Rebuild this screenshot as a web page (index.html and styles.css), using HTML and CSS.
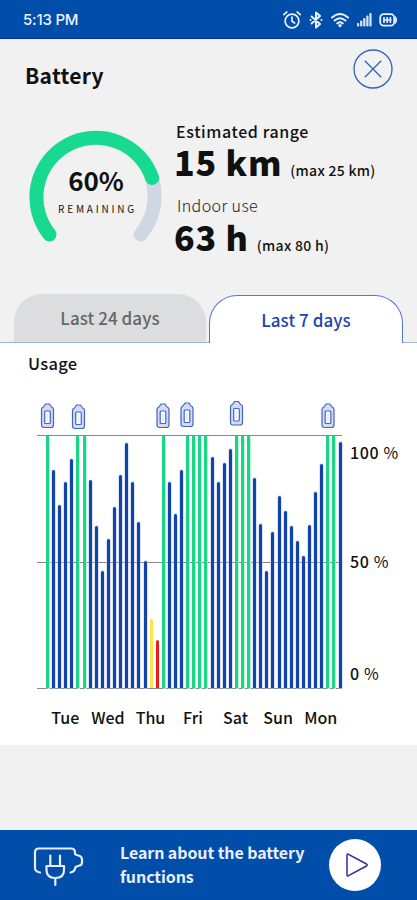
FILE: index.html
```html
<!DOCTYPE html>
<html lang="en">
<head>
  <meta charset="UTF-8">
  <meta name="viewport" content="width=device-width, initial-scale=1">
  <title>Battery</title>
  <link rel="stylesheet" href="styles.css">
</head>
<body>
  <div class="status-bar">
    <span class="time">5:13 PM</span>
    <div class="status-icons">
      <svg width="20" height="20" viewBox="0 0 20 20" fill="none" stroke="#e8efff" stroke-width="1.700" stroke-linecap="round">
        <circle cx="10" cy="11" r="6.900"/>
        <path d="M10 7v4.200l2.600 1.800M1.800 4.600l3-2.600M18.200 4.600l-3-2.600"/>
      </svg>
      <svg width="14" height="18" viewBox="0 0 14 18" fill="none" stroke="#e8efff" stroke-width="2" stroke-linejoin="round">
        <path d="M2 5l9 8-4 3.600V1.400L11 5l-9 8"/>
        <path d="M1.500 9h.1M12.400 9h.1" stroke-linecap="round"/>
      </svg>
      <svg width="20" height="16" viewBox="0 0 20 16" fill="none" stroke="#e8efff" stroke-width="2" stroke-linecap="round">
        <path d="M2 5.500Q10-1.500 18 5.500M4.600 8.600Q10 4 15.400 8.600M7.200 11.400Q10 9 12.800 11.400"/>
        <circle cx="10" cy="13.600" r=".7" fill="#e8efff"/>
      </svg>
      <svg width="15" height="15" viewBox="0 0 15 15" fill="#dbe5fa">
        <rect x="0" y="11" width="2.200" height="3.500" rx=".8"/>
        <rect x="3.100" y="8.500" width="2.200" height="6" rx=".8"/>
        <rect x="6.200" y="6" width="2.200" height="8.500" rx=".8"/>
        <rect x="9.300" y="3.500" width="2.200" height="11" rx=".8"/>
        <rect x="12.400" y="1" width="2.200" height="13.500" rx=".8"/>
      </svg>
      <svg width="19" height="14" viewBox="0 0 19 14" fill="none" stroke="#e8efff" stroke-width="1.800">
        <rect x="1.200" y="1.200" width="14" height="11.400" rx="3.500"/>
        <path d="M16.500 3.500q2.600 3.500 0 7z" fill="#e8efff" stroke-width=".8"/>
        <path d="M5 4v6M8.200 4v6M11.400 4v6M4 7h8.500" stroke-width="1.600"/>
      </svg>
    </div>
  </div>

  <header class="header">
    <h1>Battery</h1>
    <button class="close" aria-label="Close">
      <svg width="40" height="40" viewBox="0 0 40 40" fill="none" stroke="#2f62b8" stroke-width="1.300">
        <circle cx="20" cy="20" r="19"/>
        <path d="M11.800 11.800l16.400 16.400M28.200 11.800l-16.400 16.400"/>
      </svg>
    </button>
  </header>

  <section class="summary">
    <div class="gauge">
      <svg width="134" height="114" viewBox="0 0 134 114" fill="none" stroke-width="14" stroke-linecap="round">
        <path d="M123.700 49A59.500 59.500 0 0 1 112.700 105.500" stroke="#cfd8e2"/>
        <path d="M21.500 105.500A59.500 59.500 0 1 1 124.200 49" stroke="#17d990"/>
      </svg>
      <div class="gauge-text">
        <strong>60%</strong>
        <span>REMAINING</span>
      </div>
    </div>
    <div class="stats">
      <div class="stat range">
        <p class="stat-label">Estimated range</p>
        <p class="stat-value"><b>15 km</b><small>(max 25 km)</small></p>
      </div>
      <div class="stat indoor">
        <p class="stat-label">Indoor use</p>
        <p class="stat-value"><b>63 h</b><small>(max 80 h)</small></p>
      </div>
    </div>
  </section>

  <nav class="tabs">
    <a class="tab">Last 24 days</a>
    <a class="tab active">Last 7 days</a>
  </nav>

  <main class="panel">
    <h2>Usage</h2>
    <svg class="charges" width="305" height="30" viewBox="0 0 305 30">
      <defs>
        <g id="charge" fill="none" stroke-linejoin="round">
          <path d="M0 6.500q0-2 2-2.500l2-3h4l2 3q2 .5 2 2.500V22q0 2.500-2.500 2.500h-7Q0 24.500 0 22z" fill="#d3daf5" stroke="#3f66c0" stroke-width="1.200"/>
          <rect x="3.200" y="8" width="5.600" height="12.500" rx="1" fill="#fff" stroke="#3f66c0" stroke-width="1.200"/>
          <path d="M6 10.500v7.500" stroke="#e2e7f9" stroke-width="1.500"/>
        </g>
      </defs>
      <use href="#charge" x="4.500" y="3"/>
      <use href="#charge" x="35.500" y="4"/>
      <use href="#charge" x="120" y="3"/>
      <use href="#charge" x="144" y="2"/>
      <use href="#charge" x="193.500" y="0.500"/>
      <use href="#charge" x="285" y="3"/>
    </svg>
    <div class="chart">
      <div class="plot">
        <i class="bar full"></i>
        <i class="bar" style="height:218px"></i>
        <i class="bar" style="height:183px"></i>
        <i class="bar" style="height:206px"></i>
        <i class="bar" style="height:229px"></i>
        <i class="bar full"></i>
        <i class="bar full"></i>
        <i class="bar" style="height:208px"></i>
        <i class="bar" style="height:162px"></i>
        <i class="bar" style="height:117px"></i>
        <i class="bar" style="height:149px"></i>
        <i class="bar" style="height:181px"></i>
        <i class="bar" style="height:213px"></i>
        <i class="bar" style="height:245px"></i>
        <i class="bar" style="height:206px"></i>
        <i class="bar" style="height:166px"></i>
        <i class="bar" style="height:127px"></i>
        <i class="bar low" style="height:69px"></i>
        <i class="bar critical" style="height:48px"></i>
        <i class="bar full"></i>
        <i class="bar" style="height:206px"></i>
        <i class="bar" style="height:174px"></i>
        <i class="bar" style="height:218px"></i>
        <i class="bar full"></i>
        <i class="bar full"></i>
        <i class="bar full"></i>
        <i class="bar full"></i>
        <i class="bar" style="height:231px"></i>
        <i class="bar" style="height:206px"></i>
        <i class="bar" style="height:225px"></i>
        <i class="bar" style="height:239px"></i>
        <i class="bar full"></i>
        <i class="bar full"></i>
        <i class="bar full"></i>
        <i class="bar" style="height:210px"></i>
        <i class="bar" style="height:164px"></i>
        <i class="bar" style="height:117px"></i>
        <i class="bar" style="height:156px"></i>
        <i class="bar" style="height:192px"></i>
        <i class="bar" style="height:177px"></i>
        <i class="bar" style="height:162px"></i>
        <i class="bar" style="height:147px"></i>
        <i class="bar" style="height:132px"></i>
        <i class="bar" style="height:163px"></i>
        <i class="bar" style="height:196px"></i>
        <i class="bar" style="height:224px"></i>
        <i class="bar full"></i>
        <i class="bar full"></i>
        <i class="bar" style="height:246px"></i>
      </div>
      <div class="scale">
        <span>100 <em>%</em></span>
        <span>50 <em>%</em></span>
        <span>0 <em>%</em></span>
      </div>
    </div>
    <div class="days">
      <span>Tue</span>
      <span>Wed</span>
      <span>Thu</span>
      <span>Fri</span>
      <span>Sat</span>
      <span>Sun</span>
      <span>Mon</span>
    </div>
  </main>

  <footer class="learn">
    <svg class="plug" width="52" height="42" viewBox="0 0 52 42" fill="none" stroke="#e6edfc" stroke-width="2.200" stroke-linecap="round" stroke-linejoin="round">
      <path d="M7 26.500q-5-1-5-4.500V6.500q0-4 4-4h32q4 0 4 4v1.500q.5 1 3.500 1.500 3.500 1 3.500 4v3q0 3-4 3.500-3 .5-3 3-1 3-4.500 3.500"/>
      <path d="M17.300 9.500v10M27 9.500v10"/>
      <path d="M13.500 20h17.500v4q0 8-8.700 8t-8.800-8zM22.300 32v7"/>
    </svg>
    <p>Learn about the battery functions</p>
    <button class="play" aria-label="Play">
      <svg width="24" height="26" viewBox="0 0 24 26" fill="none" stroke="#2b2f96" stroke-width="1.500" stroke-linejoin="round">
        <path d="M2 3.200q0-1.600 1.500-.9l18 9.700q1.500 1 0 2l-18 9.700q-1.500.7-1.500-.9z"/>
      </svg>
    </button>
  </footer>
</body>
</html>
```

FILE: styles.css
```css
* {
  box-sizing: border-box;
}
body {
  display: flex;
  flex-direction: column;
  height: 900px;
  margin: 0;
  background-color: #f1f1f1;
  color: #111;
  font-family: "Noto Sans CJK SC", "Noto Sans", sans-serif;
}
h1, h2, p {
  margin: 0;
}
svg {
  display: block;
  flex: none;
}
button {
  padding: 0;
  border: none;
  background: none;
}

.status-bar {
  display: flex;
  justify-content: space-between;
  align-items: center;
  height: 39px;
  padding: 1px 19px 0 23px;
  background-color: #004eaa;
  border-bottom: 1px solid #00309a;
}
.time {
  color: #edf2ff;
  font: 500 15px Inter, sans-serif;
  letter-spacing: -0.2px;
}
.status-icons {
  display: flex;
  align-items: center;
  gap: 7px;
}

.header {
  display: flex;
  justify-content: space-between;
  height: 81px;
  padding: 10px 24px 0 25px;
}
h1 {
  margin-top: 11px;
  font-size: 21px;
  font-weight: 700;
  line-height: 30px;
  letter-spacing: 0.3px;
}
.close {
  width: 40px;
  height: 40px;
}

.summary {
  display: flex;
  height: 174px;
  padding-left: 28px;
}
.gauge {
  display: grid;
  width: 134px;
  height: 114px;
  margin-top: 9px;
}
.gauge svg,
.gauge-text {
  grid-area: 1 / 1;
}
.gauge-text {
  display: flex;
  flex-direction: column;
  align-items: center;
  padding-top: 35px;
}
.gauge-text strong {
  margin-left: 2px;
  font-size: 26px;
  font-weight: 700;
  line-height: 32px;
}
.gauge-text span {
  margin: 5px -5px 0 0;
  font-size: 10px;
  line-height: 16px;
  letter-spacing: 2.8px;
}
.stats {
  margin-left: 12px;
}
.stat {
  height: 75px;
}
.stat-label {
  padding-left: 2px;
  font-size: 16px;
  line-height: 22px;
}
.stat-value {
  display: flex;
  align-items: baseline;
  line-height: 40px;
}
.stat-value b {
  font-size: 34px;
  font-weight: 900;
  letter-spacing: 0.8px;
}
.stat-value small {
  margin-left: 8px;
  font-size: 14px;
  font-weight: 500;
  line-height: 38px;
  letter-spacing: 0.3px;
}
.range .stat-label {
  font-weight: 500;
  letter-spacing: 0.6px;
}
.indoor .stat-label {
  margin-top: -1px;
  margin-bottom: 1px;
  padding-left: 3px;
  color: #222;
  font-weight: 300;
  letter-spacing: 0.4px;
}

.tabs {
  display: flex;
  align-items: flex-end;
  gap: 3px;
  height: 49px;
  padding-left: 14px;
  border-bottom: 1px solid #9eb0dc;
}
.tab {
  width: 192px;
  height: 48px;
  border-radius: 28px 28px 0 0;
  background-color: #dcddde;
  color: #666;
  font-size: 17px;
  font-weight: 500;
  line-height: 47px;
  letter-spacing: 0.05px;
  text-align: center;
}
.tab.active {
  width: 194px;
  margin-bottom: -1px;
  border: 1px solid #5479c8;
  border-bottom: none;
  background-color: #fff;
  color: #1d44ac;
}

.panel {
  height: 402px;
  background-color: #fff;
}
h2 {
  padding: 8px 0 0 28px;
  font-size: 16.500px;
  font-weight: 500;
  line-height: 24px;
  letter-spacing: 0.3px;
}
.charges {
  margin: 25px 0 0 37px;
}
.chart {
  display: flex;
  height: 255px;
  margin: 5px 0 0 37px;
}
.plot {
  display: flex;
  justify-content: space-between;
  align-items: flex-end;
  width: 305px;
  height: 254px;
  padding-left: 9px;
  border-top: 1px solid #888;
  border-bottom: 1px solid #888;
  background: linear-gradient(#888, #888) 0 126px / 100% 1px no-repeat;
}
.bar {
  width: 3px;
  border-radius: 2px 2px 0 0;
  background-color: #1143a8;
  box-shadow: 0 0 1px 0.5px #bccaf0;
}
.bar.full {
  height: 252px;
  border-radius: 0;
  background-color: #1cd486;
  box-shadow: 0 0 1px 0.5px #b5f3d5;
}
.bar.low {
  background-color: #fbe34a;
  box-shadow: none;
}
.bar.critical {
  background-color: #ee1c1c;
  box-shadow: none;
}
.scale {
  display: flex;
  flex-direction: column;
  justify-content: space-between;
  padding: 5px 0 5px 8px;
  font-size: 16px;
  font-weight: 500;
  line-height: 24px;
  letter-spacing: 0.6px;
}
.scale span:nth-child(2) {
  margin-top: -4px;
}
.scale em {
  font-style: normal;
  font-weight: 400;
}
.days {
  display: flex;
  width: 298px;
  margin: 15px 0 0 44px;
  font-size: 16px;
  font-weight: 500;
  line-height: 24px;
}
.days span {
  flex: 1;
  text-align: center;
}

.learn {
  display: flex;
  align-items: center;
  height: 70px;
  margin-top: auto;
  padding: 0 36px 0 33px;
  background-color: #004eaa;
}
.plug {
  margin-top: 3px;
}
.learn p {
  width: 200px;
  margin: -3px 0 0 35px;
  color: #e9effc;
  font-size: 16px;
  font-weight: 600;
  line-height: 24px;
  letter-spacing: -0.09px;
}
.play {
  display: flex;
  align-items: center;
  justify-content: center;
  width: 52px;
  height: 52px;
  margin-left: auto;
  padding-left: 3px;
  border-radius: 50%;
  background-color: #fff;
}
```
